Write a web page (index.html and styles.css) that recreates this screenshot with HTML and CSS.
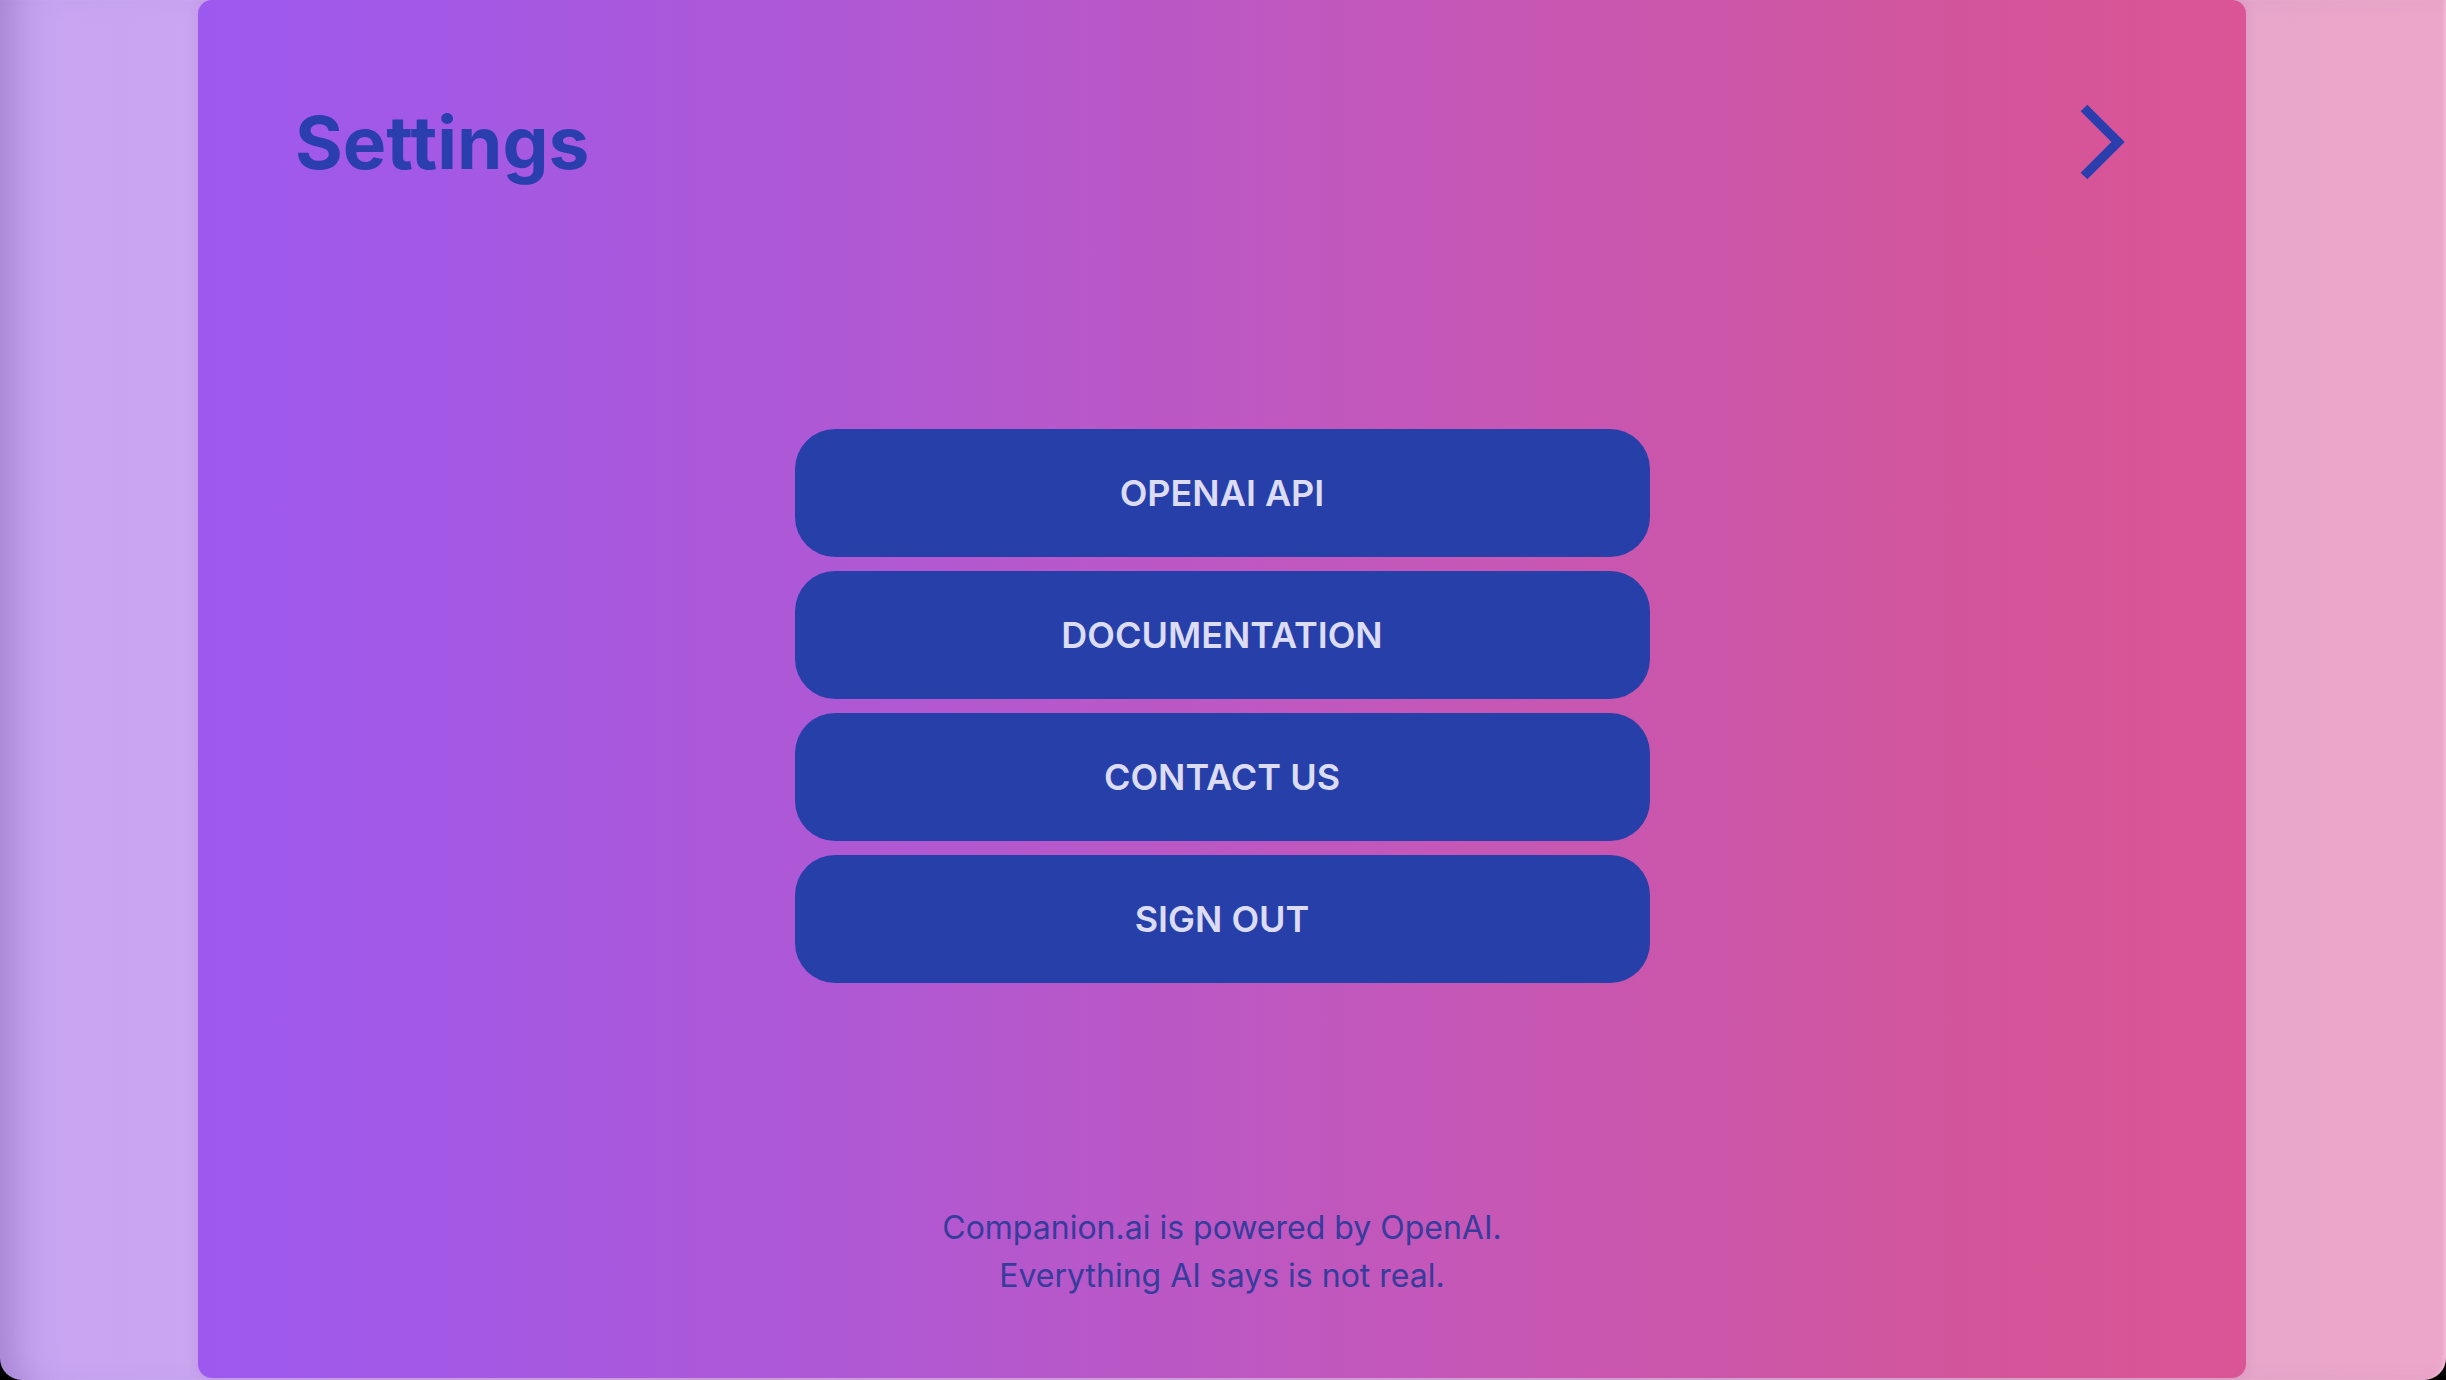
FILE: index.html
```html
<!DOCTYPE html>
<html lang="en">
<head>
<meta charset="utf-8">
<title>Settings</title>
<link rel="stylesheet" href="styles.css">
</head>
<body>
<div class="frame">
  <div class="panel">
    <header class="header">
      <h1 class="title">Settings</h1>
      <button class="close" aria-label="Close">
        <svg width="50" height="84" viewBox="0 0 50 84"><polyline points="7,8 41,42 7,76" fill="none" stroke="#2a3eae" stroke-width="9.5" stroke-linecap="butt" stroke-linejoin="miter"/></svg>
      </button>
    </header>
    <nav class="menu">
      <button class="item">OPENAI API</button>
      <button class="item">DOCUMENTATION</button>
      <button class="item">CONTACT US</button>
      <button class="item">SIGN OUT</button>
    </nav>
    <footer class="footer">
      <p>Companion.ai is powered by OpenAI.</p>
      <p>Everything AI says is not real.</p>
    </footer>
  </div>
</div>
</body>
</html>
```
FILE: styles.css
```css
* { box-sizing: border-box; }
html, body { margin: 0; padding: 0; }
body {
  background: #000;
  width: 2446px;
  height: 1380px;
  overflow: hidden;
  font-family: Inter, "Noto Sans", sans-serif;
}
.frame {
  width: 2446px;
  height: 1380px;
  border-radius: 0 0 22px 22px;
  background: linear-gradient(to right, #c8a5f2 0%, #cba6f1 10%, #e6a7cb 90%, #eca6c9 100%);
  box-shadow: inset 40px 0 40px -28px rgba(90, 60, 140, 0.35), inset -4px 0 4px -2px rgba(255,255,255,0.3);
  padding: 0 200px 2px 198px;
  display: flex;
}
.panel {
  width: 2048px;
  height: 1378px;
  border-radius: 14px;
  background: linear-gradient(to right, #9d59ef 0%, #ae58d6 30%, #c457b9 60%, #d35599 88%, #db5596 100%);
  box-shadow: 0 0 12px rgba(120, 40, 120, 0.12);
  display: flex;
  flex-direction: column;
  align-items: center;
}
.header {
  width: 100%;
  height: 284px;
  padding: 0 121px 0 97px;
  display: flex;
  justify-content: space-between;
  align-items: center;
}
.title {
  margin: 0;
  font-size: 73px;
  font-weight: 700;
  color: #2a3eae;
  line-height: 1;
}
.close {
  background: none;
  border: 0;
  padding: 0;
  margin-right: -2px;
  display: block;
  width: 50px;
  height: 84px;
}
.close svg { display: block; }
.menu {
  margin-top: 145px;
  display: flex;
  flex-direction: column;
  gap: 14px;
}
.item {
  width: 855px;
  height: 128px;
  border: 0;
  border-radius: 40px;
  background: #2740a9;
  color: #dcdcf5;
  font-family: Inter, "Noto Sans", sans-serif;
  font-size: 36px;
  font-weight: 600;
  cursor: pointer;
}
.footer {
  margin-top: auto;
  padding-bottom: 78px;
  text-align: center;
  color: #363b9c;
  font-size: 32px;
  line-height: 48px;
}
.footer p { margin: 0; }
```
